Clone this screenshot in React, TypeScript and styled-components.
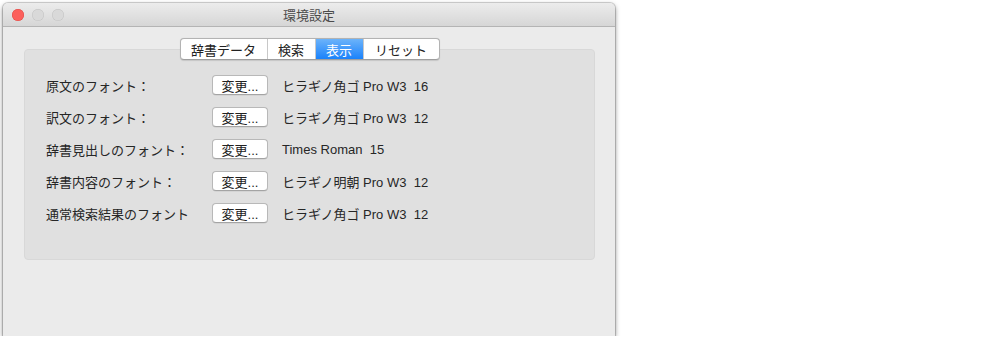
import React from "react";
import styled, { createGlobalStyle } from "styled-components";

const GlobalStyle = createGlobalStyle`
  html, body {
    margin: 0;
    padding: 0;
    background: #ffffff;
  }
  body {
    font-family: "Liberation Sans", "Noto Sans CJK JP", sans-serif;
    color: #222;
  }
`;

const Page = styled.div`
  padding: 3px 0 0 3px;
`;

const Window = styled.div`
  width: 612px;
  height: 333px;
  background: #ebebeb;
  border-radius: 5px 5px 0 0;
  box-shadow: 0 0 0 1px rgba(0, 0, 0, 0.15), 0 2px 5px rgba(0, 0, 0, 0.5);
  display: flex;
  flex-direction: column;
  overflow: hidden;
`;

const TitleBar = styled.div`
  height: 23px;
  flex: none;
  display: flex;
  align-items: center;
  position: relative;
  background: linear-gradient(#ececec, #d6d6d6);
  border-bottom: 1px solid #b4b4b4;
  border-radius: 5px 5px 0 0;
`;

const Lights = styled.div`
  display: flex;
  gap: 8px;
  padding-left: 9px;
`;

const Light = styled.span<{ $color: string; $border: string }>`
  width: 12px;
  height: 12px;
  border-radius: 50%;
  background: ${({ $color }) => $color};
  box-shadow: inset 0 0 0 0.5px ${({ $border }) => $border};
`;

const Title = styled.div`
  position: absolute;
  left: 0;
  right: 0;
  text-align: center;
  font-size: 13px;
  color: #4a4a4a;
  pointer-events: none;
`;

const Body = styled.div`
  display: flex;
  flex-direction: column;
  padding: 11px 20px 0 21px;
`;

const TabRow = styled.div`
  display: flex;
  justify-content: center;
  position: relative;
  z-index: 1;
`;

const Tabs = styled.div`
  display: flex;
  height: 20px;
  background: #fff;
  border: 1px solid #b3b3b3;
  border-bottom-color: #9f9f9f;
  border-radius: 4px;
  box-shadow: 0 0.5px 1px rgba(0, 0, 0, 0.12);
  overflow: hidden;
`;

const Tab = styled.div<{ $active?: boolean; $w: number }>`
  width: ${({ $w }) => $w}px;
  display: flex;
  align-items: center;
  justify-content: center;
  font-size: 13px;
  color: ${({ $active }) => ($active ? "#fff" : "#222")};
  background: ${({ $active }) =>
    $active ? "linear-gradient(#6cb3fa, #1a82fb)" : "transparent"};
  border-left: 1px solid #c8c8c8;
  &:first-child {
    border-left: none;
  }
`;

const Panel = styled.div`
  margin-top: -11px;
  background: #e0e0e0;
  border: 1px solid #d8d8d8;
  border-radius: 4px;
  height: 211px;
  box-sizing: border-box;
  padding: 19px 0 0 21px;
  display: flex;
  flex-direction: column;
`;

const Row = styled.div`
  height: 32px;
  display: flex;
  align-items: center;
`;

const Label = styled.div`
  width: 166px;
  font-size: 13px;
  color: #262626;
`;

const Button = styled.div`
  width: 54px;
  height: 18px;
  background: #fff;
  border: 1px solid #b8b8b8;
  border-bottom-color: #a4a4a4;
  border-radius: 4px;
  box-shadow: 0 0.5px 0.5px rgba(0, 0, 0, 0.1);
  display: flex;
  align-items: center;
  justify-content: center;
  font-size: 13px;
  color: #222;
`;

const Value = styled.div`
  margin-left: 14px;
  font-size: 13px;
  color: #262626;
  white-space: pre;
`;

const tabs = [
  { label: "辞書データ", w: 86 },
  { label: "検索", w: 47 },
  { label: "表示", w: 47, active: true },
  { label: "リセット", w: 75 },
];

const rows = [
  { label: "原文のフォント：", value: "ヒラギノ角ゴ Pro W3  16" },
  { label: "訳文のフォント：", value: "ヒラギノ角ゴ Pro W3  12" },
  { label: "辞書見出しのフォント：", value: "Times Roman  15" },
  { label: "辞書内容のフォント：", value: "ヒラギノ明朝 Pro W3  12" },
  { label: "通常検索結果のフォント", value: "ヒラギノ角ゴ Pro W3  12" },
];

export default function App() {
  return (
    <Page>
      <GlobalStyle />
      <Window>
        <TitleBar>
          <Lights>
            <Light $color="#fc605c" $border="#de4a45" />
            <Light $color="#d9d9d9" $border="#c2c2c2" />
            <Light $color="#d9d9d9" $border="#c2c2c2" />
          </Lights>
          <Title>環境設定</Title>
        </TitleBar>
        <Body>
          <TabRow>
            <Tabs>
              {tabs.map((t) => (
                <Tab key={t.label} $w={t.w} $active={t.active}>
                  {t.label}
                </Tab>
              ))}
            </Tabs>
          </TabRow>
          <Panel>
            {rows.map((r) => (
              <Row key={r.label}>
                <Label>{r.label}</Label>
                <Button>変更...</Button>
                <Value>{r.value}</Value>
              </Row>
            ))}
          </Panel>
        </Body>
      </Window>
    </Page>
  );
}
